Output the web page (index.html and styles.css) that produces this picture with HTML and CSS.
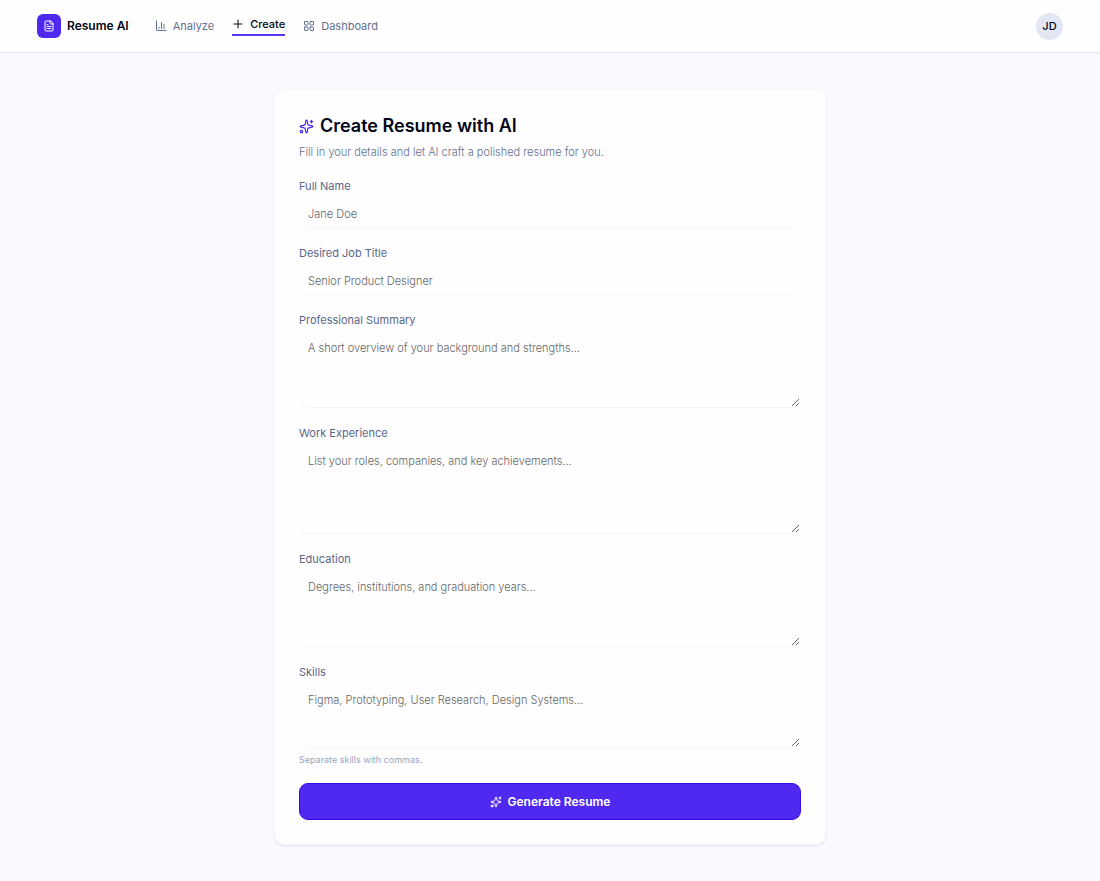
FILE: index.html
```html
<!DOCTYPE html>
<html lang="en">
<head>
<meta charset="utf-8">
<meta name="viewport" content="width=device-width, initial-scale=1">
<title>Resume AI</title>
<link rel="stylesheet" href="styles.css">
</head>
<body>
<svg class="sprite" aria-hidden="true">
  <symbol id="sparkles" viewBox="0 0 24 24">
    <path d="M11.017 2.814a1 1 0 0 1 1.966 0l1.051 5.558a2 2 0 0 0 1.594 1.594l5.558 1.051a1 1 0 0 1 0 1.966l-5.558 1.051a2 2 0 0 0-1.594 1.594l-1.051 5.558a1 1 0 0 1-1.966 0l-1.051-5.558a2 2 0 0 0-1.594-1.594l-5.558-1.051a1 1 0 0 1 0-1.966l5.558-1.051a2 2 0 0 0 1.594-1.594z"/>
    <path d="M20 2v4M22 4h-4"/>
    <circle cx="4" cy="20" r="2"/>
  </symbol>
</svg>
<header class="topbar">
  <a class="brand" href="#">
    <span class="brand-mark">
      <svg class="icon icon-sm" viewBox="0 0 24 24" aria-hidden="true"><path d="M15 2H6a2 2 0 0 0-2 2v16a2 2 0 0 0 2 2h12a2 2 0 0 0 2-2V7z"/><path d="M14 2v4a2 2 0 0 0 2 2h4M10 9H8M16 13H8M16 17H8"/></svg>
    </span>
    Resume AI
  </a>
  <nav class="nav" aria-label="Main">
    <a class="nav-link" href="#"><svg class="icon icon-sm" viewBox="0 0 24 24" aria-hidden="true"><path d="M3 2v18a1 1 0 0 0 1 1h18M8 17v-3M13 17V5M18 17V9"/></svg>Analyze</a>
    <a class="nav-link active" href="#" aria-current="page"><svg class="icon icon-sm" viewBox="0 0 24 24" aria-hidden="true"><path d="M4 12h16M12 4v16"/></svg>Create</a>
    <a class="nav-link" href="#"><svg class="icon icon-sm" viewBox="0 0 24 24" aria-hidden="true"><rect x="3" y="3" width="7" height="7" rx="1"/><rect x="14" y="3" width="7" height="7" rx="1"/><rect x="14" y="14" width="7" height="7" rx="1"/><rect x="3" y="14" width="7" height="7" rx="1"/></svg>Dashboard</a>
  </nav>
  <button class="avatar" type="button">JD</button>
</header>
<main class="page">
  <form class="card">
    <div class="heading">
      <h1 class="title"><svg class="icon icon-lg" aria-hidden="true"><use href="#sparkles"/></svg>Create Resume with AI</h1>
      <p class="subtitle">Fill in your details and let AI craft a polished resume for you.</p>
    </div>
    <div class="field">
      <label for="name">Full Name</label>
      <input class="control" id="name" type="text" placeholder="Jane Doe">
    </div>
    <div class="field">
      <label for="job">Desired Job Title</label>
      <input class="control" id="job" type="text" placeholder="Senior Product Designer">
    </div>
    <div class="field">
      <label for="summary">Professional Summary</label>
      <textarea class="control area-md" id="summary" placeholder="A short overview of your background and strengths..."></textarea>
    </div>
    <div class="field">
      <label for="work">Work Experience</label>
      <textarea class="control area-lg" id="work" placeholder="List your roles, companies, and key achievements..."></textarea>
    </div>
    <div class="field">
      <label for="education">Education</label>
      <textarea class="control area-md" id="education" placeholder="Degrees, institutions, and graduation years..."></textarea>
    </div>
    <div class="field">
      <label for="skills">Skills</label>
      <textarea class="control area-sm" id="skills" placeholder="Figma, Prototyping, User Research, Design Systems..." aria-describedby="skills-hint"></textarea>
      <p class="hint" id="skills-hint">Separate skills with commas.</p>
    </div>
    <button class="submit" type="submit"><svg class="icon icon-sm" aria-hidden="true"><use href="#sparkles"/></svg>Generate Resume</button>
  </form>
</main>
</body>
</html>
```
FILE: styles.css
```css
* { box-sizing: border-box; }
body {
  margin: 0;
  background: #f9f9ff;
  color: #020617;
  font-family: Inter, "Liberation Sans", sans-serif;
  font-size: 11px;
  line-height: 16px;
}
h1, p { margin: 0; }
a { color: inherit; text-decoration: none; }
input, textarea, button { font: inherit; }
.sprite { display: none; }
.icon {
  flex: none;
  fill: none;
  stroke: currentColor;
  stroke-width: 2;
  stroke-linecap: round;
  stroke-linejoin: round;
}
.icon-sm { width: 12px; height: 12px; }
.icon-lg { width: 15px; height: 15px; color: #4f29f0; }
.topbar {
  display: flex;
  align-items: center;
  gap: 26px;
  height: 53px;
  padding: 0 37px;
  background: #fefefe;
  border-bottom: 1px solid #e6e8f4;
}
.brand {
  display: flex;
  align-items: center;
  gap: 6px;
  font-size: 12px;
  font-weight: 600;
}
.brand-mark {
  display: grid;
  place-items: center;
  width: 24px;
  height: 24px;
  border-radius: 6px;
  background: #4f29f0;
  color: #fff;
}
.nav { display: flex; align-items: center; gap: 18px; }
.nav-link {
  display: flex;
  align-items: center;
  gap: 6px;
  color: #64708f;
  font-weight: 400;
}
.nav-link .icon { stroke-width: 2; }
.nav-link.active {
  color: #020617;
  font-weight: 500;
  padding-bottom: 2px;
  border-bottom: 2px solid #5b36f2;
}
.avatar {
  margin-left: auto;
  width: 27px;
  height: 27px;
  padding: 0;
  border: 0;
  border-radius: 50%;
  background: #e3e6f3;
  color: #020617;
  font-weight: 500;
}
.page { padding: 36px 24px; }
.card {
  display: flex;
  flex-direction: column;
  gap: 17px;
  max-width: 552px;
  margin: 0 auto;
  padding: 24px;
  border: 1px solid #f7f7fc;
  border-radius: 10px;
  background: #fefefe;
  box-shadow: 0 1px 2px rgb(20 20 60 / 10%);
}
.heading { display: flex; flex-direction: column; gap: 5px; }
.title {
  display: flex;
  align-items: center;
  gap: 6px;
  font-size: 18px;
  font-weight: 600;
  line-height: 24px;
}
.subtitle { color: #64708f; font-weight: 300; line-height: 18px; }
.field { display: flex; flex-direction: column; gap: 6px; }
.field label { color: #5a6688; font-weight: 400; align-self: flex-start; }
.control {
  display: block;
  width: 100%;
  padding: 5px 8px;
  border: 1px solid transparent;
  border-bottom-color: #f7f7fb;
  border-radius: 8px;
  background: transparent;
  color: #020617;
  font-weight: 300;
}
.control::placeholder { color: #666; opacity: 1; }
textarea.control { resize: vertical; }
.area-sm { height: 62px; }
.area-md { height: 74px; }
.area-lg { height: 87px; }
.hint { color: #9aa6bf; font-size: 9px; line-height: 12px; }
.submit {
  display: flex;
  align-items: center;
  justify-content: center;
  gap: 6px;
  height: 37px;
  border: 1px solid #3a08e6;
  border-radius: 9px;
  background: #4f29f0;
  color: #fff;
  font-size: 12px;
  font-weight: 600;
}
```
